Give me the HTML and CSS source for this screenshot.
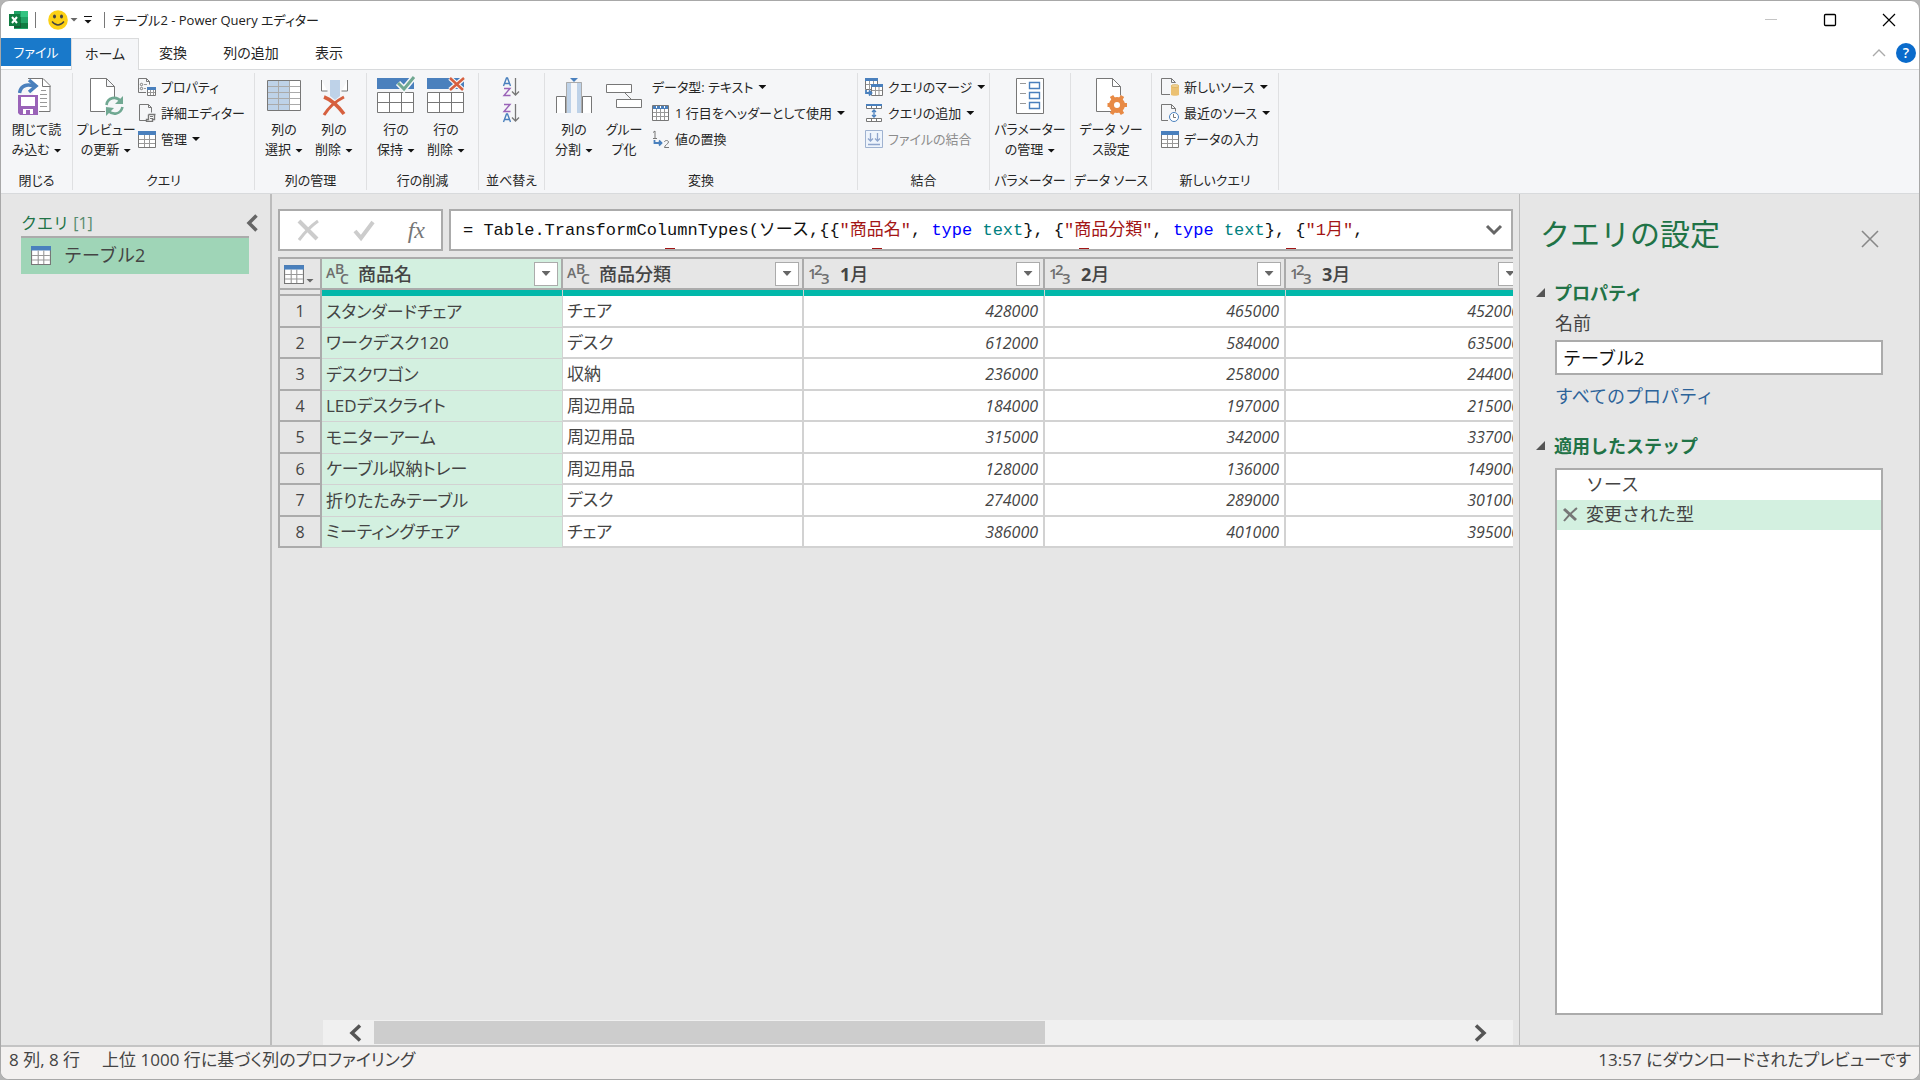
FILE: index.html
```html
<!DOCTYPE html>
<html lang="ja">
<head>
<meta charset="utf-8">
<title>テーブル2 - Power Query エディター</title>
<link rel="stylesheet" href="styles.css">
</head>
<body>
<svg class="defs" aria-hidden="true">
  <symbol id="i-table" viewBox="0 0 18 18"><path d="M.5 1.500h17v16H.5z" fill="#fff" stroke="#777"/><path d="M0 1h18v4H0z" fill="#4a80bd"/><path d="M6.500 5v12M11.500 5v12M1 9.500h16M1 13.500h16" stroke="#999" fill="none"/></symbol>
</svg>
<div class="window">
  <header class="titlebar">
    <svg class="app-icon" width="20" height="20" viewBox="0 0 20 20"><path d="M5 1h14v18H5z" fill="#21a366"/><path d="M5 7h7v6H5z" fill="#107c41"/><path d="M12 1h7v6h-7z" fill="#33c481"/><path d="M5 13h14v5H5z" fill="#185c37"/><path d="M12 13h7v5h-7z" fill="#107c41"/><path d="M0 4h11v12H0z" fill="#107c41"/><path d="m3 7 5 6M8 7l-5 6" stroke="#fff" stroke-width="2"/></svg>
    <span class="bar"></span>
    <button class="smile" aria-label="フィードバック"><svg width="20" height="20" viewBox="0 0 20 20"><circle cx="10" cy="10" r="9.800" fill="#fcd116"/><ellipse cx="6.500" cy="6.500" rx="1.500" ry="2" fill="#444"/><ellipse cx="13.500" cy="6.500" rx="1.500" ry="2" fill="#444"/><path d="M4 11.500q6 7 12 0" fill="none" stroke="#444" stroke-width="1.300"/></svg><i class="caret gray"></i></button>
    <button class="custom" aria-label="クイック アクセス ツール バーのカスタマイズ"><i class="caret"></i></button>
    <span class="bar"></span>
    <h1>テーブル2 - Power Query エディター</h1>
    <div class="controls">
      <button aria-label="最小化"><svg width="14" height="14"><path d="M1 6.500h12" stroke="#c4c4c4"/></svg></button>
      <button aria-label="最大化"><svg width="14" height="14"><rect x="1.500" y="1.500" width="11" height="11" rx="1" fill="none" stroke="#000" stroke-width="1.300"/></svg></button>
      <button aria-label="閉じる"><svg width="14" height="14"><path d="m1 1 12 12M13 1 1 13" stroke="#000" stroke-width="1.200"/></svg></button>
    </div>
  </header>
  <nav class="tabs">
    <button class="file">ファイル</button>
    <button class="home">ホーム</button>
    <button class="tab">変換</button>
    <button class="tab wide">列の追加</button>
    <button class="tab">表示</button>
    <div class="tab-end">
      <button aria-label="リボンを折りたたむ"><svg width="14" height="8"><path d="m1 7 6-6 6 6" fill="none" stroke="#aaa" stroke-width="1.400"/></svg></button>
      <button class="help" aria-label="ヘルプ">?</button>
    </div>
  </nav>
  <section class="ribbon">
    <div class="group g-close">
      <div class="tools">
        <button class="big"><svg width="36" height="40" viewBox="0 0 36 40"><path d="M10 2.500h15l7 7v26H21" fill="#fff" stroke="#777"/><path d="M24.500 2.500v8h8" fill="none" stroke="#777"/><path d="M23 14.500h5M22 18.500h7M22 22.500h7M22 26.500h7M22 30.500h7" stroke="#999"/><path d="M1.500 17C3 9 9 8 16 10" fill="none" stroke="#f5f6f8" stroke-width="7"/><path d="M1.500 17C3 9 9 8 16 10" fill="none" stroke="#4a80bd" stroke-width="3.500"/><path d="m11 4 7 6-7 6" fill="none" stroke="#4a80bd" stroke-width="3.500"/><path d="M0 19h20v20H2l-2-2z" fill="#9a63b8"/><path d="M3 21h14v9H3z" fill="#fff"/><path d="M5 33h10v5H5z" fill="#fff"/><path d="M8 34h4v4H8z" fill="#9a63b8"/></svg><span>閉じて読<br>み込む<i class="caret"></i></span></button>
      </div>
      <h2>閉じる</h2>
    </div>
    <div class="group g-query">
      <div class="tools">
        <button class="big w56"><svg width="36" height="40" viewBox="0 0 36 40"><path d="M2.500 35.500v-33h16l8 8v11M2.500 35.500H17M18.500 2.500v8h8" fill="none" stroke="#777"/><path d="M3 3h15v8h8v11l-8 4-1 9H3z" fill="#fff"/><path d="M18.500 29c1-8 10-9 14-4M34.500 31c-2 8-10 8-14 4" fill="none" stroke="#70a892" stroke-width="2.600"/><path d="M35 20v8h-8zM18 40v-9l8 1z" fill="#70a892"/></svg><span>プレビュー<br>の更新<i class="caret"></i></span></button>
        <div class="stack">
          <button class="small"><svg width="18" height="18" viewBox="0 0 18 18"><path d="M8 14.500H.5V.5h8l3 3v3M8.500.5v3h3" fill="none" stroke="#777"/><circle cx="3.500" cy="6.500" r="1.200" fill="none" stroke="#777"/><circle cx="3.500" cy="10.500" r="1.200" fill="none" stroke="#777"/><path d="M6 6.500h3M6 10.500h2" stroke="#999"/><path d="M9.500 9.500h8v8h-8z" fill="#fff" stroke="#777"/><path d="M9 9h9v3H9z" fill="#4a80bd"/><path d="M12.500 12v5M15.500 12v5M10 14.500h7" stroke="#999"/></svg>プロパティ</button>
          <button class="small"><svg width="18" height="18" viewBox="0 0 18 18"><path d="M8 16.500H1.500V.5h9l3 3v5M10.500.5v3h3" fill="none" stroke="#777"/><path d="M10.500 10.500h7M10.500 10.500v5h-2v2h6v-2h2v-5" fill="#fff" stroke="#777" stroke-width="1.400"/><path d="M12 12.500h3M12 14.500h3" stroke="#777"/></svg>詳細エディター</button>
          <button class="small"><svg width="18" height="18"><use href="#i-table"/></svg>管理<i class="caret"></i></button>
        </div>
      </div>
      <h2>クエリ</h2>
    </div>
    <div class="group g-two">
      <div class="tools">
        <button class="big w50"><svg width="36" height="40" viewBox="0 0 36 40"><path d="M1.500 4.500h33v30h-33z" fill="#fff"/><path d="M2 5h22v29H2z" fill="#bed2e8"/><path d="M12.500 5v29M23.500 5v29M2 10.500h32M2 16.500h32M2 22.500h32M2 28.500h32" stroke="#aaa"/><path d="M1.500 4.500h33v30h-33z" fill="none" stroke="#777"/></svg><span>列の<br>選択<i class="caret"></i></span></button>
        <button class="big w50"><svg width="36" height="40" viewBox="0 0 36 40"><path d="M5.500 4v11h6M31.500 4v11h-6" fill="#fff" stroke="#777"/><path d="M14 4h10v16l-5 4-5-4z" fill="#bed2e8"/><path d="M8 21c8 3 14 9 20 17" stroke="#d6603f" stroke-width="3.500" fill="none"/><path d="M28 21C20 25 13 31 8 39" stroke="#d6603f" stroke-width="3" fill="none"/></svg><span>列の<br>削除<i class="caret"></i></span></button>
      </div>
      <h2>列の管理</h2>
    </div>
    <div class="group g-two">
      <div class="tools">
        <button class="big w50"><svg width="40" height="40" viewBox="0 0 40 40"><path d="M1 2h37v11H1z" fill="#4a80bd"/><path d="M1.500 16.500h36v20h-36zM13.500 16v20M25.500 16v20M1 26.500h37" fill="#fff" stroke="#777"/><path d="m22 7 6 6L38 1" fill="none" stroke="#f5f6f8" stroke-width="6"/><path d="m22 7 6 6L38 1" fill="none" stroke="#70a892" stroke-width="3"/></svg><span>行の<br>保持<i class="caret"></i></span></button>
        <button class="big w50"><svg width="40" height="40" viewBox="0 0 40 40"><path d="M1 2h37v11H1z" fill="#4a80bd"/><path d="M1.500 16.500h36v20h-36zM13.500 16v20M25.500 16v20M1 26.500h37" fill="#fff" stroke="#777"/><path d="m24 2 13 12M38 2 24 14" stroke="#f5f6f8" stroke-width="5"/><path d="m24 2 13 12M38 2 24 14" stroke="#d6603f" stroke-width="2.500"/></svg><span>行の<br>削除<i class="caret"></i></span></button>
      </div>
      <h2>行の削減</h2>
    </div>
    <div class="group g-sort">
      <div class="tools">
        <div class="stack">
          <button class="small" aria-label="昇順で並べ替え"><svg width="18" height="20" viewBox="0 0 18 20"><path d="m1.500 9 3-8h1l3 8M2.500 6.500h5" fill="none" stroke="#4a80bd" stroke-width="1.400"/><path d="M2 11.500h6l-6 7h6.500" fill="none" stroke="#9a63b8" stroke-width="1.400"/><path d="M13.500 1v17M10 14.500l3.500 3.500 3.500-3.500" fill="none" stroke="#777" stroke-width="1.300"/></svg></button>
          <button class="small" aria-label="降順で並べ替え"><svg width="18" height="20" viewBox="0 0 18 20"><path d="m1.500 19 3-8h1l3 8M2.500 16.500h5" fill="none" stroke="#4a80bd" stroke-width="1.400"/><path d="M2 1.500h6l-6 7h6.500" fill="none" stroke="#9a63b8" stroke-width="1.400"/><path d="M13.500 1v17M10 14.500l3.500 3.500 3.500-3.500" fill="none" stroke="#777" stroke-width="1.300"/></svg></button>
        </div>
      </div>
      <h2>並べ替え</h2>
    </div>
    <div class="group g-trans">
      <div class="tools">
        <button class="big w50"><svg width="38" height="40" viewBox="0 0 38 40"><path d="M1.500 37V20.500h9V37M36.500 37V20.500h-9V37" fill="#fff" stroke="#777"/><path d="M11 6h16v31H11z" fill="#bed2e8"/><path d="M16 7h6v30h-6z" fill="#f5f6f8"/><path d="M11.500 37V6.500h15V37" fill="none" stroke="#aaa"/><path d="M15 2h8l-4 4z" fill="#4a80bd"/></svg><span>列の<br>分割<i class="caret"></i></span></button>
        <button class="big w50"><svg width="38" height="40" viewBox="0 0 38 40"><path d="M1.500 8.500h25v8h-25zM11.500 23.500h25v8h-25zM20 17l6 6" fill="#fff" stroke="#777"/></svg><span>グルー<br>プ化</span></button>
        <div class="stack">
          <button class="small">データ型: テキスト<i class="caret"></i></button>
          <button class="small"><svg width="18" height="18" viewBox="0 0 18 18"><path d="M.5 1.500h16v15H.5z" fill="#fff" stroke="#777"/><path d="M4.500 4v12M8.500 4v12M12.500 4v12M1 8.500h15M1 12.500h15" stroke="#999"/><path d="M1 2h15v3H1z" fill="#4a80bd"/><path d="M4.500 2v2M8.500 2v2M12.500 2v2" stroke="#fff"/></svg>1 行目をヘッダーとして使用<i class="caret"></i></button>
          <button class="small"><svg width="18" height="18" viewBox="0 0 18 18"><path d="M1 2.500 3 1v7M1 8.500h4" fill="none" stroke="#777"/><path d="M12.500 12c0-2 4-2 4 0s-4 3-4 5.500h4.500" fill="none" stroke="#777"/><path d="M2.500 10v3H9M7 10.500 9.500 13 7 15.500" fill="none" stroke="#4a80bd" stroke-width="1.800"/></svg>値の置換</button>
        </div>
      </div>
      <h2>変換</h2>
    </div>
    <div class="group g-merge">
      <div class="tools">
        <div class="stack">
          <button class="small"><svg width="18" height="18" viewBox="0 0 18 18"><path d="M.5.5h12v11H.5z" fill="#fff" stroke="#777"/><path d="M4.500 3v9M8.500 3v9M1 6.500h11" stroke="#999"/><path d="M0 0h13v3H0z" fill="#4a80bd"/><path d="M6.500 6.500h11v11h-11z" fill="#fff" stroke="#777"/><path d="M10.500 9v8M14 9v8M7 12.500h10" stroke="#999"/><path d="M6 6h12v3H6z" fill="#4a80bd"/><path d="M1 12v3h5M4 12.500 6.500 15 4 17.500" fill="none" stroke="#4a80bd" stroke-width="1.800"/></svg>クエリのマージ<i class="caret"></i></button>
          <button class="small"><svg width="18" height="18" viewBox="0 0 18 18"><path d="M1.500 1.500h15v3h-15zM6.500 2v2M11.500 2v2M1.500 14.500h15v3h-15zM6.500 15v2M11.500 15v2" fill="#fff" stroke="#777"/><path d="M1 0h16v2H1z" fill="#4a80bd"/><path d="M9 6v7M7 8l2-2 2 2M7 11l2 2 2-2" fill="none" stroke="#4a80bd" stroke-width="1.300"/></svg>クエリの追加<i class="caret"></i></button>
          <button class="small" disabled><svg width="18" height="18" viewBox="0 0 18 18"><path d="M.5.5h17v17H.5z" fill="#eef4fc" stroke="#9fb2d0"/><path d="M5.500 3v8M3 8.500 5.500 11 8 8.500M12.500 3v8M10 8.500l2.500 2.500L15 8.500M3 14.500h12" fill="none" stroke="#8fa5cc" stroke-width="1.300"/></svg>ファイルの結合</button>
        </div>
      </div>
      <h2>結合</h2>
    </div>
    <div class="group g-one">
      <div class="tools">
        <button class="big"><svg width="30" height="40" viewBox="0 0 30 40"><path d="M1.500 2.500h27v35h-27z" fill="#fff" stroke="#777"/><path d="M5 7.500h6M5 17.500h6M5 27.500h6" stroke="#999"/><path d="M14.500 6.500h10v6h-10zM14.500 16.500h10v6h-10zM14.500 26.500h10v6h-10z" fill="none" stroke="#4a80bd" stroke-width="1.400"/></svg><span>パラメーター<br>の管理<i class="caret"></i></span></button>
      </div>
      <h2>パラメーター</h2>
    </div>
    <div class="group g-one">
      <div class="tools">
        <button class="big"><svg width="32" height="40" viewBox="0 0 32 40"><path d="M16 35.500H1.500v-33h16l8 8v9" fill="#fff" stroke="#777"/><path d="M17.500 2.500v8h8" fill="none" stroke="#777"/><circle cx="22" cy="29" r="5.500" fill="#fff" stroke="#e88a45" stroke-width="5"/><path d="M12.500 29h4M27.500 29h4.500M16.500 20l2.500 4M27.500 20l-2.500 4M16.500 38l2.500-4M27.500 38l-2.500-4" stroke="#e88a45" stroke-width="4"/></svg><span>データ ソー<br>ス設定</span></button>
      </div>
      <h2>データ ソース</h2>
    </div>
    <div class="group g-new">
      <div class="tools">
        <div class="stack">
          <button class="small"><svg width="18" height="18" viewBox="0 0 18 18"><path d="M9 16.500H.5V.5h10l4 4M10.500.5v4h4" fill="none" stroke="#777"/><path d="M10 8.500h8V17c-1 1-7 1-8 0z" fill="#ebc173"/><ellipse cx="14" cy="8" rx="4" ry="1.500" fill="#f0d296" stroke="#d8a94e" stroke-width=".6"/></svg>新しいソース<i class="caret"></i></button>
          <button class="small"><svg width="18" height="18" viewBox="0 0 18 18"><path d="M7 16.500H.5V.5h10l4 4v3M10.500.5v4h4" fill="none" stroke="#777"/><circle cx="13" cy="13" r="4.500" fill="#fff" stroke="#4a80bd"/><path d="M12.500 10v3.500H15" fill="none" stroke="#777"/></svg>最近のソース<i class="caret"></i></button>
          <button class="small"><svg width="18" height="18"><use href="#i-table"/></svg>データの入力</button>
        </div>
      </div>
      <h2>新しいクエリ</h2>
    </div>
  </section>
  <main class="body">
    <aside class="queries">
      <div class="queries-head"><h2>クエリ <span>[1]</span></h2><button aria-label="折りたたむ"><svg width="12" height="18"><path d="M10.500 1.500 3 9l7.500 7.500" fill="none" stroke="#666" stroke-width="3.500"/></svg></button></div>
      <button class="query"><svg width="20" height="20"><use href="#i-table"/></svg>テーブル2</button>
    </aside>
    <section class="center">
      <div class="formula-row">
        <div class="formula-actions">
          <button aria-label="キャンセル"><svg width="24" height="24" stroke="#ccc" fill="none"><path d="M3 3 21 21" stroke-width="4"/><path d="M22 3C15 8 9 14 3 22" stroke-width="3"/></svg></button>
          <button aria-label="確定"><svg width="24" height="24"><path d="m3 13 6 7L21 4" fill="none" stroke="#ccc" stroke-width="4"/></svg></button>
          <button class="fx" aria-label="ステップの追加">fx</button>
        </div>
        <div class="formula">
          <div class="code-area">
            <code>= Table.TransformColumnTypes(ソース,{{<b class="str">"商品名"</b>, <b class="kw">type</b> <b class="ty">text</b>}, {<b class="str">"商品分類"</b>, <b class="kw">type</b> <b class="ty">text</b>}, {<b class="str">"1月"</b>,</code>
            <div class="next-line"><i></i><i></i><i></i><i></i></div>
          </div>
          <button aria-label="数式バーを展開"><svg width="18" height="14"><path d="m2 3 7 7 7-7" fill="none" stroke="#666" stroke-width="3"/></svg></button>
        </div>
      </div>
      <div class="grid">
        <table>
          <colgroup><col class="c-num"><col class="c"><col class="c"><col class="c"><col class="c"><col class="c"></colgroup>
          <thead>
            <tr>
              <th><button class="corner" aria-label="テーブル メニュー"><svg width="20" height="20"><use href="#i-table"/></svg><i class="caret gray"></i></button></th>
              <th class="sel"><div class="head"><svg class="type abc" width="24" height="24"><text x="0" y="16">A</text><text x="9" y="12">B</text><text x="14" y="22">C</text></svg><span>商品名</span><button class="filter" aria-label="フィルター"><i class="caret gray"></i></button></div></th>
              <th><div class="head"><svg class="type abc" width="24" height="24"><text x="0" y="16">A</text><text x="9" y="12">B</text><text x="14" y="22">C</text></svg><span>商品分類</span><button class="filter" aria-label="フィルター"><i class="caret gray"></i></button></div></th>
              <th><div class="head"><svg class="type" width="24" height="24"><text x="0" y="17">1</text><text x="6" y="13">2</text><text x="13" y="22">3</text></svg><span><b>1</b>月</span><button class="filter" aria-label="フィルター"><i class="caret gray"></i></button></div></th>
              <th><div class="head"><svg class="type" width="24" height="24"><text x="0" y="17">1</text><text x="6" y="13">2</text><text x="13" y="22">3</text></svg><span><b>2</b>月</span><button class="filter" aria-label="フィルター"><i class="caret gray"></i></button></div></th>
              <th><div class="head"><svg class="type" width="24" height="24"><text x="0" y="17">1</text><text x="6" y="13">2</text><text x="13" y="22">3</text></svg><span><b>3</b>月</span><button class="filter" aria-label="フィルター"><i class="caret gray"></i></button></div></th>
            </tr>
            <tr class="quality"><td></td><td></td><td></td><td></td><td></td><td></td></tr>
          </thead>
          <tbody>
            <tr><th>1</th><td class="sel">スタンダードチェア</td><td>チェア</td><td class="n">428000</td><td class="n">465000</td><td class="n">452000</td></tr>
            <tr><th>2</th><td class="sel">ワークデスク120</td><td>デスク</td><td class="n">612000</td><td class="n">584000</td><td class="n">635000</td></tr>
            <tr><th>3</th><td class="sel">デスクワゴン</td><td>収納</td><td class="n">236000</td><td class="n">258000</td><td class="n">244000</td></tr>
            <tr><th>4</th><td class="sel">LEDデスクライト</td><td>周辺用品</td><td class="n">184000</td><td class="n">197000</td><td class="n">215000</td></tr>
            <tr><th>5</th><td class="sel">モニターアーム</td><td>周辺用品</td><td class="n">315000</td><td class="n">342000</td><td class="n">337000</td></tr>
            <tr><th>6</th><td class="sel">ケーブル収納トレー</td><td>周辺用品</td><td class="n">128000</td><td class="n">136000</td><td class="n">149000</td></tr>
            <tr><th>7</th><td class="sel">折りたたみテーブル</td><td>デスク</td><td class="n">274000</td><td class="n">289000</td><td class="n">301000</td></tr>
            <tr><th>8</th><td class="sel">ミーティングチェア</td><td>チェア</td><td class="n">386000</td><td class="n">401000</td><td class="n">395000</td></tr>
          </tbody>
        </table>
      </div>
      <div class="scroll">
        <button aria-label="左へ"><svg width="16" height="18"><path d="M13 1.500 5 9l8 7.500" fill="none" stroke="#555" stroke-width="3.500"/></svg></button>
        <div class="track"><div class="thumb"></div></div>
        <button aria-label="右へ"><svg width="16" height="18"><path d="m3 1.500 8 7.500-8 7.500" fill="none" stroke="#555" stroke-width="3.500"/></svg></button>
      </div>
    </section>
    <aside class="settings">
      <div class="settings-head"><h2>クエリの設定</h2><button aria-label="閉じる"><svg width="18" height="18"><path d="m1 1 16 16M17 1 1 17" stroke="#888" stroke-width="1.600"/></svg></button></div>
      <h3><svg width="10" height="10"><path d="M9 0v9H0z" fill="#555"/></svg>プロパティ</h3>
      <div class="field">
        <label for="name">名前</label>
        <input id="name" type="text" value="テーブル2">
        <a href="#all">すべてのプロパティ</a>
      </div>
      <h3><svg width="10" height="10"><path d="M9 0v9H0z" fill="#555"/></svg>適用したステップ</h3>
      <ul class="steps">
        <li>ソース</li>
        <li class="active"><button aria-label="削除"><svg width="15" height="15" stroke="#777" fill="none"><path d="m1 2 12 11" stroke-width="3"/><path d="M14 1C9 5 5 9 1 14" stroke-width="2"/></svg></button>変更された型</li>
      </ul>
    </aside>
  </main>
  <footer class="status"><span>8 列, 8 行</span><span>上位 1000 行に基づく列のプロファイリング</span><span class="right">13:57 にダウンロードされたプレビューです</span></footer>
</div>
</body>
</html>
```
FILE: styles.css
```css
* { box-sizing: border-box; }
body {
  margin: 0;
  background: #b4b4b4;
  font-family: "Open Sans", "Noto Sans CJK JP", sans-serif;
  font-feature-settings: "palt";
  font-size: 14px;
  line-height: 20px;
  color: #262626;
}
h1, h2, h3, ul { margin: 0; padding: 0; font-weight: 400; font-size: inherit; }
button {
  border: 0;
  padding: 0;
  background: none;
  font: inherit;
  font-feature-settings: inherit;
  color: inherit;
  white-space: nowrap;
}
svg { display: block; flex: none; }
.defs { position: absolute; width: 0; height: 0; }
.window {
  display: flex;
  flex-direction: column;
  height: 100vh;
  border: 1px solid #a8a8a8;
  border-radius: 9px;
  background: #fff;
  overflow: hidden;
}
.caret {
  display: inline-block;
  flex: none;
  width: 8px;
  height: 4px;
  margin-left: 4px;
  vertical-align: middle;
  background: #111;
  clip-path: polygon(0 0, 100% 0, 50% 100%);
}
.caret.gray { background: #666; }

/* title bar */
.titlebar { display: flex; align-items: center; height: 37px; padding-left: 8px; }
.bar { width: 1px; height: 16px; margin-left: 6px; background: #777; }
.smile { display: flex; align-items: center; margin-left: 12px; }
.smile .caret { margin-left: 2px; }
.custom { display: flex; width: 8px; height: 8px; margin: 0 6px 0 6px; align-items: flex-end; border-top: 1px solid #111; }
.custom .caret { margin: 0; }
.titlebar h1 { margin-left: 8px; color: #222; font-size: 13px; }
.controls { display: flex; margin-left: auto; padding-right: 1px; }
.controls button { display: grid; place-items: center; width: 59px; height: 36px; }

/* tabs */
.tabs { display: flex; height: 31px; }
.tabs > button { height: 31px; padding-bottom: 2px; }
.tabs .file { width: 70px; height: 28px; padding: 0; background: #1979ca; color: #fff; font-size: 13px; }
.tabs .home { width: 68px; height: 32px; border: 1px solid #dadbdc; border-bottom: 0; background: #f5f6f8; position: relative; }
.tabs .tab { width: 68px; }
.tabs .wide { width: 88px; }
.tab-end { display: flex; align-items: center; gap: 10px; margin-left: auto; padding: 0 3px 2px 0; }
.help { width: 20px; height: 20px; border-radius: 50%; background: #0a6bcb; color: #fff; font-weight: 600; }

/* ribbon */
.ribbon { display: flex; flex: none; height: 125px; padding: 3px 0; border: 1px solid #d8dadc; border-width: 1px 0; background: #f5f6f8; font-size: 13px; }
.group { display: flex; flex-direction: column; border-right: 1px solid #dfe0e2; }
.tools { display: flex; flex: 1; padding-left: 4px; }
.group h2 { text-align: center; white-space: nowrap; }
.g-close { width: 72px; }
.g-query { width: 182px; }
.g-two { width: 112px; }
.g-sort { width: 66px; }
.g-trans { width: 313px; }
.g-merge { width: 132px; }
.g-one { width: 81px; }
.g-new { width: 127px; }
.g-close .tools, .g-one .tools { justify-content: center; padding: 0; }
.g-sort .tools { padding-left: 20px; }
.g-new .tools { padding-left: 6px; }
.big { display: flex; flex-direction: column; align-items: center; gap: 3px; height: 88px; padding-top: 3px; }
.big > svg { height: 40px; }
.w56 { width: 58px; }
.w50 { width: 50px; }
.stack { display: flex; flex-direction: column; align-items: flex-start; padding: 1px 0 0 3px; }
.small { display: flex; align-items: center; gap: 5px; height: 26px; }
.small .caret { margin-left: 0; }
.small:disabled { color: #8c8c8c; }

/* body */
.body { display: flex; flex: 1; min-height: 0; background: #e6e6e6; color: #444; font-size: 17px; line-height: 24px; }
.queries { flex: none; width: 271px; padding: 16px 10px 0 20px; border-right: 2px solid #bcbcbc; }
.queries-head { display: flex; align-items: center; justify-content: space-between; height: 26px; color: #217346; }
.queries-head h2 { font-size: 16px; font-feature-settings: normal; }
.queries-head span { color: #558c6e; }
.queries-head button { width: 14px; }
.query { display: flex; align-items: center; gap: 13px; width: 228px; height: 38px; padding: 0 0 3px 10px; border-top: 2px solid #ababab; background: #9fd5b7; font-size: 18px; font-feature-settings: normal; }

.center { display: flex; flex: 1; flex-direction: column; min-width: 0; padding: 15px 6px 0; }
.formula-row { display: flex; gap: 6px; height: 42px; }
.formula-actions, .formula { display: flex; align-items: center; border: 2px solid #ababab; background: #fff; }
.formula-actions { width: 165px; justify-content: space-between; padding: 0 16px; }
.fx { font: italic 24px/30px "Liberation Serif", serif; color: #777; }
.formula { flex: 1; min-width: 0; padding-right: 8px; }
.code-area { display: flex; flex: 1; flex-direction: column; justify-content: space-between; height: 38px; padding: 8px 0 0 12px; overflow: hidden; }
.code-area code { font: 17px/24px "Liberation Mono", "Noto Sans CJK JP", monospace; font-feature-settings: normal; color: #111; white-space: pre; }
code b { font-weight: 400; }
.str { color: #a31515; }
.kw { color: #00f; }
.ty { color: #008080; }
.next-line { display: flex; gap: 197px; padding-left: 202px; }
.next-line i { width: 10px; height: 1px; background: #a31515; }

.grid { flex: 1; min-height: 0; margin-top: 6px; overflow: hidden; }
table { width: 1249px; table-layout: fixed; border-collapse: separate; border-spacing: 0; border: 2px solid #ababab; border-width: 2px 0 0 2px; }
.c-num { width: 42px; }
.c { width: 241px; }
th, td { padding: 0 4px; border: 2px solid #d2d2d2; border-width: 0 2px 2px 0; font-weight: 400; text-align: left; background: #fff; line-height: 24px; }
th { border-color: #ababab; background: #e6e6e6; }
thead th { height: 31px; padding: 0 3px 0 4px; }
.quality td { height: 6px; padding: 0; border-width: 0 1px 0 0; background: #01b8aa; }
.quality td:first-child { border: 2px solid #ababab; border-width: 0 2px 2px 0; background: #e6e6e6; }
tbody th { padding: 0; text-align: center; font-size: 16px; }
tbody tr:nth-child(odd) { height: 32px; }
tbody tr:nth-child(even) { height: 31px; }
.sel { background: #d3f0e0; }
td.sel { border-width: 0 1px 1px 0; }
td.n { padding-right: 5px; font-style: italic; font-size: 16px; text-align: right; }
.head { display: flex; align-items: center; gap: 8px; height: 29px; font-size: 18px; font-weight: 500; }
.head .filter { display: grid; place-items: center; width: 24px; height: 24px; margin-left: auto; border: 1px solid #ababab; background: #fff; }
.type { font-size: 15px; font-weight: 600; fill: #6e6e6e; overflow: visible; }
.abc { font-size: 14px; }
.filter .caret { width: 9px; height: 5px; margin: 0; }
.corner { display: flex; align-items: flex-end; }
.corner .caret { margin: 0 0 1px 2px; }

.scroll { display: flex; height: 25px; margin-left: 45px; background: #f0f0f0; }
.scroll button { display: grid; place-items: center; width: 51px; padding-left: 12px; }
.scroll button:last-child { width: 65px; padding: 0; }
.track { flex: 1; padding: 1px 0; }
.thumb { width: 62.5%; height: 23px; background: #cdcdcd; }

.settings { display: flex; flex: none; flex-direction: column; width: 400px; padding: 16px 36px 30px 16px; border-left: 1px solid #bcbcbc; font-size: 18px; font-feature-settings: normal; }
.settings-head { display: flex; justify-content: space-between; align-items: center; height: 48px; padding: 0 4px; color: #217346; }
.settings-head h2 { font-size: 30px; line-height: 40px; }
.settings-head button { padding-top: 10px; }
.settings h3 { display: flex; align-items: center; gap: 8px; height: 30px; margin-top: 20px; color: #217346; font-weight: 700; }
.field { display: flex; flex-direction: column; margin-left: 19px; }
.field label { height: 32px; line-height: 30px; }
.field input { height: 35px; padding: 0 6px 2px; border: 2px solid #ababab; background: #fff; font: inherit; font-feature-settings: inherit; color: #111; }
.field a { height: 36px; line-height: 42px; color: #2d6399; text-decoration: none; }
.steps { flex: 1; margin: 7px 0 0 19px; border: 2px solid #ababab; background: #fff; list-style: none; }
.steps li { display: flex; align-items: center; height: 30px; padding: 0 0 2px 29px; }
.steps .active { gap: 8px; padding-left: 6px; background: #d3f0e0; }

.status { display: flex; flex: none; gap: 22px; height: 34px; padding: 0 8px; border-top: 2px solid #c4c4c4; background: #f3f1f0; color: #444; font-size: 17px; line-height: 26px; }
.status .right { margin-left: auto; }
```
